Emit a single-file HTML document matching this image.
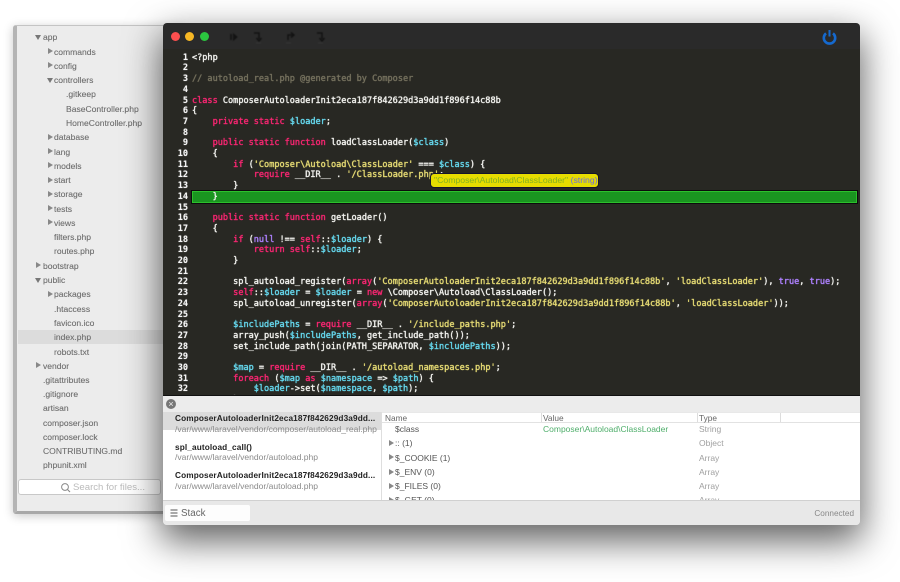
<!DOCTYPE html>
<html><head><meta charset="utf-8"><style>
html,body{margin:0;padding:0;background:#fff;}
body{width:900px;height:582px;position:relative;overflow:hidden;font-family:"Liberation Sans",sans-serif;}
.a{position:absolute;}
#side{left:13px;top:25px;width:170px;height:489px;background:#ececec;border:1px solid #c4c4c4;border-left:4px solid #b4b4b4;border-bottom:3px solid #a8a8a8;box-sizing:border-box;border-radius:3px;box-shadow:0 2px 10px rgba(0,0,0,.22);}
.f{position:absolute;font-size:8.55px;line-height:14px;color:#6c6c6c;white-space:nowrap;filter:blur(.25px);-webkit-text-stroke:.1px #6c6c6c;}
.t{position:absolute;width:0;height:0;border-left:5px solid #888;border-top:3.5px solid transparent;border-bottom:3.5px solid transparent;}
.d{position:absolute;width:0;height:0;border-top:5px solid #777;border-left:3.5px solid transparent;border-right:3.5px solid transparent;}
#win{left:163px;top:23px;width:697px;height:502px;background:#e8e8e8;border-radius:4px;box-shadow:0 14px 36px 2px rgba(0,0,0,.62);overflow:hidden;}
#bar{left:0;top:0;width:697px;height:26px;background:#2a2a2a;}
#code{left:0;top:26px;width:697px;height:346px;background:#282823;overflow:hidden;border-bottom:1px solid #111;box-sizing:content-box;}
pre{margin:0;font-family:"DejaVu Sans Mono","Liberation Mono",monospace;font-size:8.55px;line-height:10.71px;position:absolute;color:#f4f4f0;-webkit-text-stroke:.25px currentColor;text-shadow:0 0 1px rgba(255,255,255,.5);}
#nums{right:672px;top:3.7px;text-align:right;color:#f6f6f6;font-weight:bold;width:30px;-webkit-text-stroke:0;}
#src{left:29px;top:3.7px;z-index:3;}
.k{color:#f92672;text-shadow:0 0 1px rgba(249,38,114,.6);}.v{color:#66d9ef;text-shadow:0 0 1px rgba(102,217,239,.6);}.s{color:#e6db74;text-shadow:0 0 1px rgba(230,219,116,.6);}.c{color:#75715e;text-shadow:0 0 1px rgba(117,113,94,.6);}.n{color:#ae81ff;text-shadow:0 0 1px rgba(174,129,255,.6);}
#hl{left:29px;top:141.5px;width:665px;height:12.5px;background:#1a9520;border:1px solid #2cc02c;outline:1px solid #0c0c0c;box-sizing:border-box;z-index:1;}
#tip{left:267px;top:124px;width:169px;height:15px;background:#e6dc00;border-radius:4px;border:1px solid #15152a;box-sizing:border-box;font-size:8.7px;line-height:13px;padding-left:3px;color:#7fb022;z-index:5;white-space:nowrap;}
#tip b{font-weight:normal;color:#6a6ae6;}
.st{position:absolute;left:12px;font-size:8.25px;font-weight:bold;color:#222;white-space:nowrap;letter-spacing:.12px;filter:blur(.2px);}
.sp{position:absolute;left:12px;font-size:8.55px;color:#8a8a8a;white-space:nowrap;filter:blur(.2px);}
.r{position:absolute;font-size:8.5px;color:#555;white-space:nowrap;filter:blur(.2px);}
.y{position:absolute;left:353px;font-size:8.5px;color:#a0a0a0;white-space:nowrap;filter:blur(.2px);}
.g{position:absolute;left:7px;width:0;height:0;border-left:5px solid #888;border-top:3px solid transparent;border-bottom:3px solid transparent;}
</style></head><body>
<div class="a" id="side"></div>
<div class="d" style="left:35px;top:35px"></div><div class="f" style="left:43px;top:30px">app</div>
<div class="t" style="left:48px;top:48px"></div><div class="f" style="left:54px;top:44.5px">commands</div>
<div class="t" style="left:48px;top:62px"></div><div class="f" style="left:54px;top:58.5px">config</div>
<div class="d" style="left:47px;top:78px"></div><div class="f" style="left:54px;top:73px">controllers</div>
<div class="f" style="left:66px;top:87px">.gitkeep</div>
<div class="f" style="left:66px;top:101.5px">BaseController.php</div>
<div class="f" style="left:66px;top:116px">HomeController.php</div>
<div class="t" style="left:48px;top:134px"></div><div class="f" style="left:54px;top:130px">database</div>
<div class="t" style="left:48px;top:148px"></div><div class="f" style="left:54px;top:144.5px">lang</div>
<div class="t" style="left:48px;top:162px"></div><div class="f" style="left:54px;top:158.5px">models</div>
<div class="t" style="left:48px;top:177px"></div><div class="f" style="left:54px;top:173px">start</div>
<div class="t" style="left:48px;top:191px"></div><div class="f" style="left:54px;top:187px">storage</div>
<div class="t" style="left:48px;top:205px"></div><div class="f" style="left:54px;top:201.5px">tests</div>
<div class="t" style="left:48px;top:219px"></div><div class="f" style="left:54px;top:215.5px">views</div>
<div class="f" style="left:54px;top:230px">filters.php</div>
<div class="f" style="left:54px;top:244px">routes.php</div>
<div class="t" style="left:36px;top:262px"></div><div class="f" style="left:43px;top:258.5px">bootstrap</div>
<div class="d" style="left:35px;top:278px"></div><div class="f" style="left:43px;top:273px">public</div>
<div class="t" style="left:48px;top:291px"></div><div class="f" style="left:54px;top:287px">packages</div>
<div class="f" style="left:54px;top:301.5px">.htaccess</div>
<div class="f" style="left:54px;top:316px">favicon.ico</div>
<div class="a" style="left:18px;top:330px;width:145px;height:14px;background:#dcdcdc"></div>
<div class="f" style="left:54px;top:330px">index.php</div>
<div class="f" style="left:54px;top:344.5px">robots.txt</div>
<div class="t" style="left:36px;top:362px"></div><div class="f" style="left:43px;top:358.5px">vendor</div>
<div class="f" style="left:43px;top:373px">.gitattributes</div>
<div class="f" style="left:43px;top:387px">.gitignore</div>
<div class="f" style="left:43px;top:401px">artisan</div>
<div class="f" style="left:43px;top:415.5px">composer.json</div>
<div class="f" style="left:43px;top:430px">composer.lock</div>
<div class="f" style="left:43px;top:444px">CONTRIBUTING.md</div>
<div class="f" style="left:43px;top:458px">phpunit.xml</div>
<div class="a" style="left:18px;top:479px;width:143px;height:16px;background:#fff;border:1px solid #c8c8c8;border-radius:3px;box-sizing:border-box"></div>
<svg class="a" style="left:60px;top:482px" width="11" height="11" viewBox="0 0 11 11"><circle cx="5" cy="5" r="3.4" fill="none" stroke="#888" stroke-width="1"/><path d="M7.5 7.5L10 10" stroke="#888" stroke-width="1.1"/></svg>
<div class="f" style="left:73px;top:480.5px;color:#bbb;font-size:9.6px;-webkit-text-stroke:0">Search for files...</div>

<div class="a" id="win">
 <div class="a" id="bar">
  <div class="a" style="left:8px;top:9px;width:9px;height:9px;border-radius:50%;background:#fc4f4f"></div>
  <div class="a" style="left:22px;top:9px;width:9px;height:9px;border-radius:50%;background:#f6b724"></div>
  <div class="a" style="left:36.5px;top:9px;width:9px;height:9px;border-radius:50%;background:#2bc53f"></div>
  <svg class="a" style="left:60px;top:6px;filter:blur(.4px)" width="112" height="16" viewBox="0 0 112 16" fill="none" stroke="#131313" stroke-width="1.5">
   <path d="M8 5v6" stroke-width="1.6"/><path d="M10.5 5l3.5 3-3.5 3z" fill="#131313" stroke-width="1"/>
   <path d="M31 4h5v6M33.5 9l2.5 3 2.5-3"/><path d="M33 14h5" stroke="#333"/>
   <path d="M65 11V6h5M68 3.5L71 6l-3 2.5"/><path d="M63 14h5" stroke="#333"/>
   <path d="M94 4h5v6M96.5 9l2.5 3 2.5-3"/><path d="M95 14h5" stroke="#333"/>
  </svg>
  <svg class="a" style="left:659px;top:6px" width="15" height="16" viewBox="0 0 15 16" fill="none" stroke="#1569cf" stroke-width="2.6"><path d="M4 4.4A5.7 5.7 0 1 0 11 4.4"/><path d="M7.5 1v6.5" stroke-width="2"/></svg>
 </div>
 <div class="a" id="code">
  <div class="a" id="hl"></div>
<pre class="" id="nums">1
2
3
4
5
6
7
8
9
10
11
12
13
14
15
16
17
18
19
20
21
22
23
24
25
26
27
28
29
30
31
32</pre>
<pre id="src">&lt;?php

<span class="c">// autoload_real.php @generated by Composer</span>

<span class="k">class</span> ComposerAutoloaderInit2eca187f842629d3a9dd1f896f14c88b
{
    <span class="k">private static</span> <span class="v">$loader</span>;

    <span class="k">public static function</span> loadClassLoader(<span class="v">$class</span>)
    {
        <span class="k">if</span> (<span class="s">'Composer\Autoload\ClassLoader'</span> === <span class="v">$class</span>) {
            <span class="k">require</span> __DIR__ . <span class="s">'/ClassLoader.php'</span>;
        }
    }

    <span class="k">public static function</span> getLoader()
    {
        <span class="k">if</span> (<span class="n">null</span> !== <span class="k">self</span>::<span class="v">$loader</span>) {
            <span class="k">return self</span>::<span class="v">$loader</span>;
        }

        spl_autoload_register(<span class="k">array</span>(<span class="s">'ComposerAutoloaderInit2eca187f842629d3a9dd1f896f14c88b'</span>, <span class="s">'loadClassLoader'</span>), <span class="n">true</span>, <span class="n">true</span>);
        <span class="k">self</span>::<span class="v">$loader</span> = <span class="v">$loader</span> = <span class="k">new</span> \Composer\Autoload\ClassLoader();
        spl_autoload_unregister(<span class="k">array</span>(<span class="s">'ComposerAutoloaderInit2eca187f842629d3a9dd1f896f14c88b'</span>, <span class="s">'loadClassLoader'</span>));

        <span class="v">$includePaths</span> = <span class="k">require</span> __DIR__ . <span class="s">'/include_paths.php'</span>;
        array_push(<span class="v">$includePaths</span>, get_include_path());
        set_include_path(join(PATH_SEPARATOR, <span class="v">$includePaths</span>));

        <span class="v">$map</span> = <span class="k">require</span> __DIR__ . <span class="s">'/autoload_namespaces.php'</span>;
        <span class="k">foreach</span> (<span class="v">$map</span> <span class="k">as</span> <span class="v">$namespace</span> =&gt; <span class="v">$path</span>) {
            <span class="v">$loader</span>-&gt;set(<span class="v">$namespace</span>, <span class="v">$path</span>);
        }</pre>
  <div class="a" id="tip">"Composer\Autoload\ClassLoader" <b>(string)</b></div>
 </div>
 <!-- panel -->
 <div class="a" style="left:0;top:373px;width:697px;height:16px;background:#ececec"></div>
 <div class="a" style="left:3px;top:375.5px;width:10px;height:10px;border-radius:50%;background:#777;color:#eee;font-size:9px;line-height:10px;text-align:center">×</div>
 <div class="a" style="left:0;top:389px;width:218px;height:88px;background:#fff;overflow:hidden">
  <div class="a" style="left:0;top:0;width:218px;height:18px;background:#dcdcdc"></div>
  <div class="st" style="top:2px">ComposerAutoloaderInit2eca187f842629d3a9dd...</div>
  <div class="sp" style="top:11.5px">/var/www/laravel/vendor/composer/autoload_real.php</div>
  <div class="st" style="top:30.5px">spl_autoload_call()</div>
  <div class="sp" style="top:40px">/var/www/laravel/vendor/autoload.php</div>
  <div class="st" style="top:59px">ComposerAutoloaderInit2eca187f842629d3a9dd...</div>
  <div class="sp" style="top:68.5px">/var/www/laravel/vendor/autoload.php</div>
 </div>
 <div class="a" style="left:218px;top:389px;width:1px;height:88px;background:#dedede"></div>
 <div class="a" style="left:219px;top:389px;width:478px;height:88px;background:#fff;overflow:hidden">
  <div class="a" style="left:0;top:0;width:478px;height:11px;border-bottom:1px solid #e2e2e2;border-top:1px solid #e8e8e8;box-sizing:border-box"></div>
  <div class="a" style="left:159px;top:1px;width:1px;height:9px;background:#ddd"></div>
  <div class="a" style="left:315px;top:1px;width:1px;height:9px;background:#ddd"></div>
  <div class="a" style="left:398px;top:1px;width:1px;height:9px;background:#ddd"></div>
  <div class="r" style="left:3px;top:.5px;color:#666;font-size:8.3px">Name</div>
  <div class="r" style="left:161px;top:.5px;color:#666;font-size:8.3px">Value</div>
  <div class="r" style="left:317px;top:.5px;color:#666;font-size:8.3px">Type</div>
  <div class="r" style="left:13px;top:12px">$class</div>
  <div class="r" style="left:161px;top:12px;color:#4fae6b">Composer\Autoload\ClassLoader</div>
  <div class="y" style="left:317px;top:12px">String</div>
  <div class="g" style="top:28px"></div><div class="r" style="left:13px;top:26px">:: (1)</div><div class="y" style="left:317px;top:26px">Object</div>
  <div class="g" style="top:42px"></div><div class="r" style="left:13px;top:40.5px">$_COOKIE (1)</div><div class="y" style="left:317px;top:40.5px">Array</div>
  <div class="g" style="top:57px"></div><div class="r" style="left:13px;top:55px">$_ENV (0)</div><div class="y" style="left:317px;top:55px">Array</div>
  <div class="g" style="top:71px"></div><div class="r" style="left:13px;top:69px">$_FILES (0)</div><div class="y" style="left:317px;top:69px">Array</div>
  <div class="g" style="top:85px"></div><div class="r" style="left:13px;top:83px">$_GET (0)</div><div class="y" style="left:317px;top:83px">Array</div>
 </div>
 <div class="a" style="left:0;top:477px;width:697px;height:25px;background:#e8e8e8;border-top:1px solid #d0d0d0;box-sizing:border-box"></div>
 <div class="a" style="left:2px;top:482px;width:85px;height:16px;background:#fdfdfd;border-radius:2px"></div>
 <svg class="a" style="left:7px;top:486px" width="9" height="8" viewBox="0 0 9 8" stroke="#555" stroke-width="1"><path d="M.5 1h7M.5 4h7M.5 7h7"/></svg>
 <div class="a" style="left:18px;top:485px;font-size:9.8px;color:#666;filter:blur(.2px)">Stack</div>
 <div class="a" style="right:6px;top:486px;font-size:8.2px;color:#888;filter:blur(.2px)">Connected</div>
</div>
</body></html>
